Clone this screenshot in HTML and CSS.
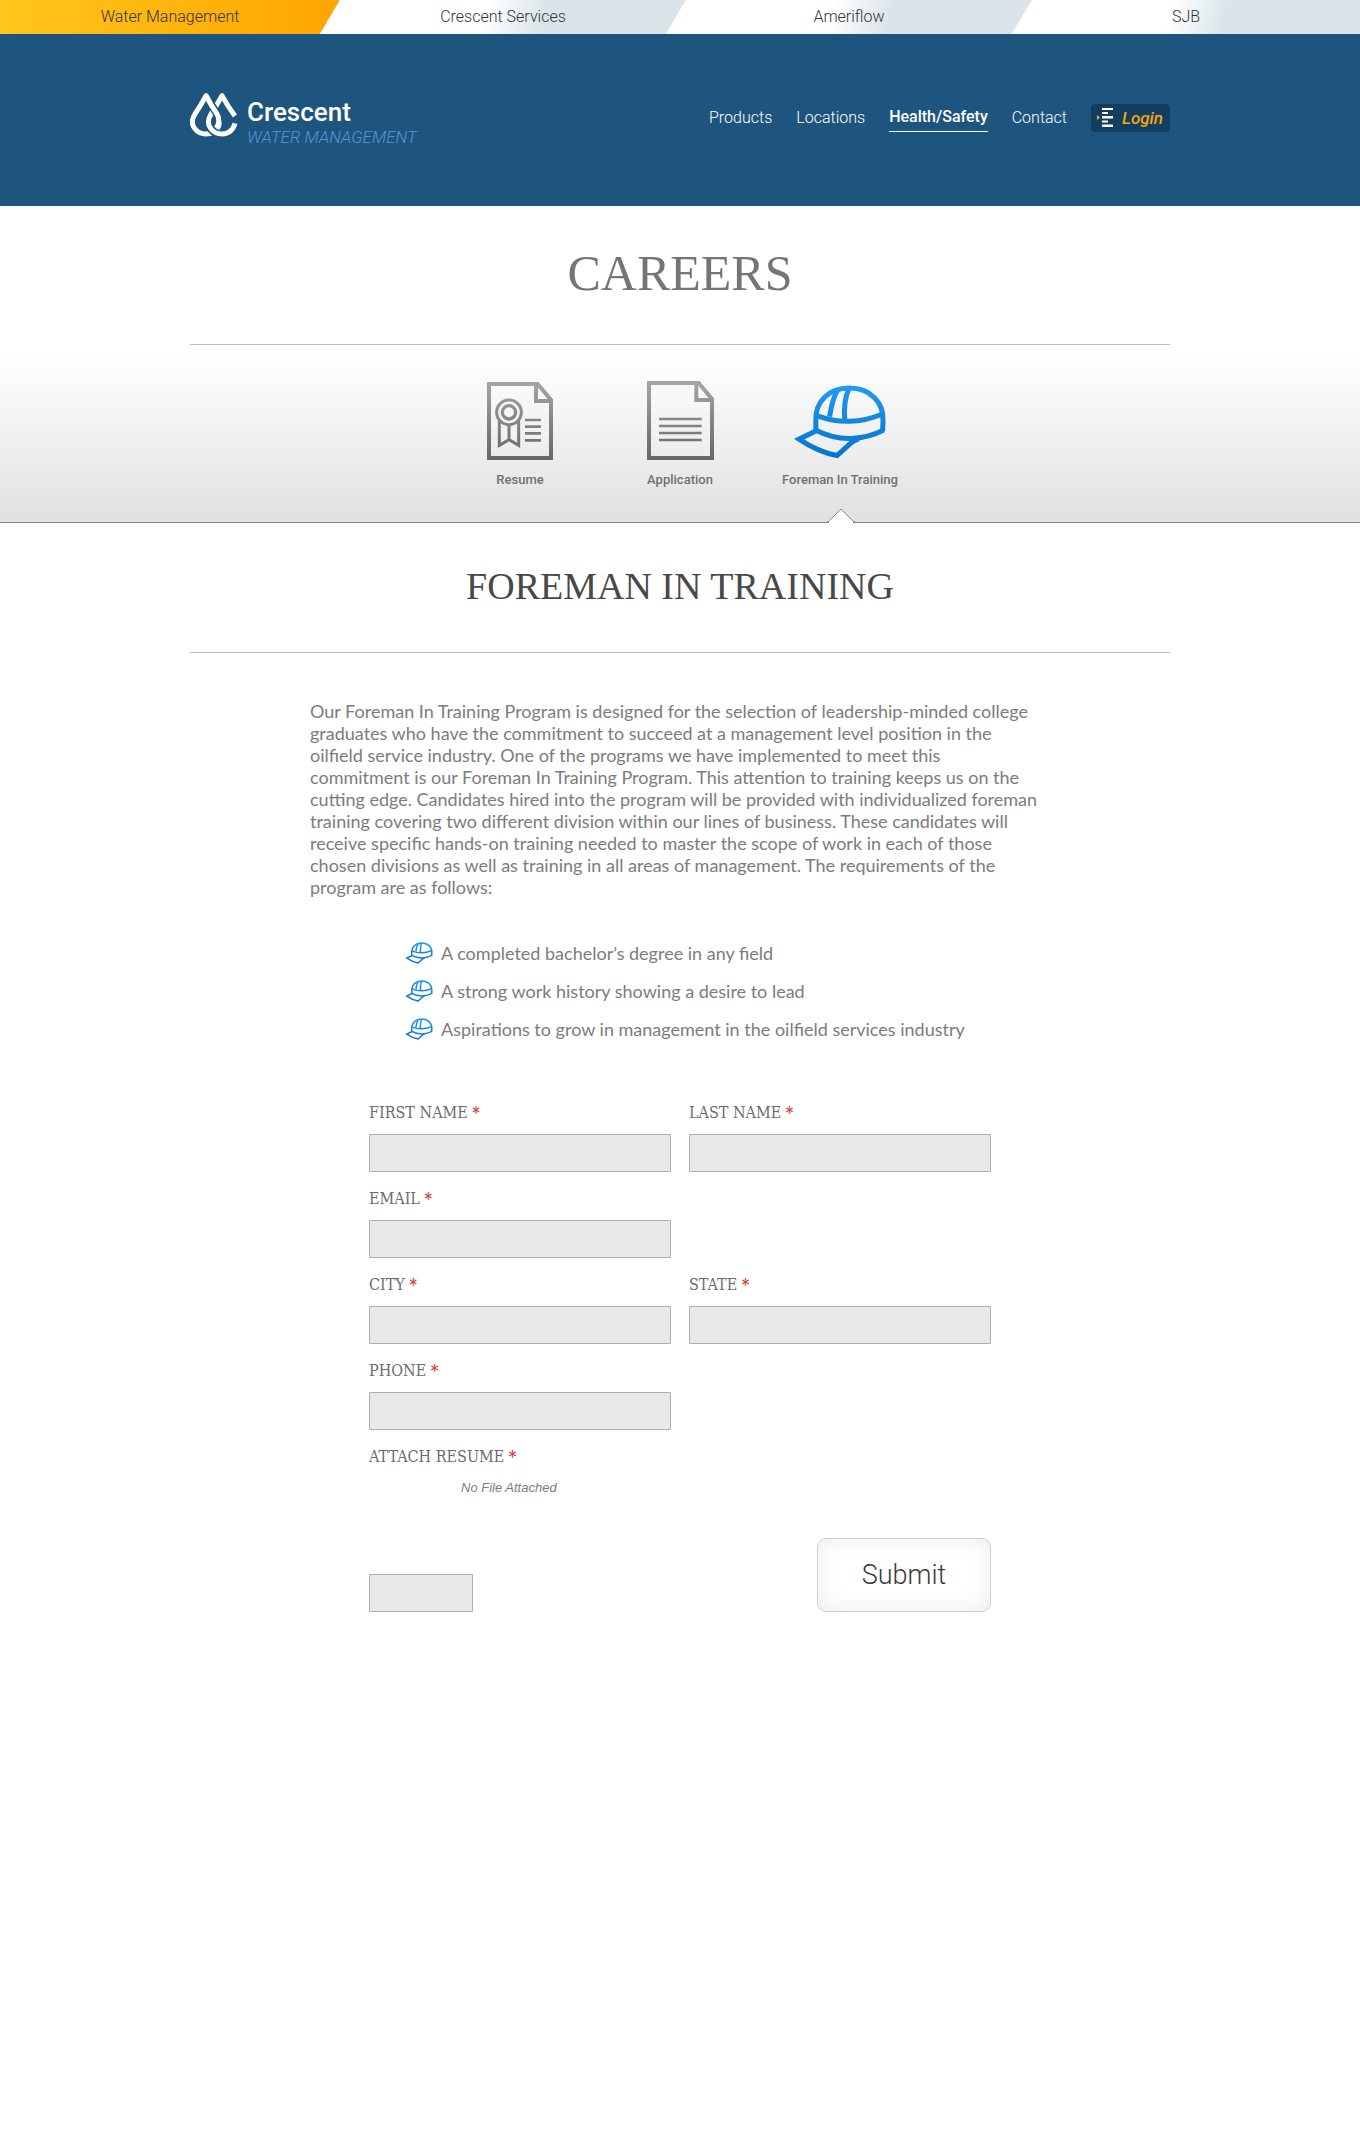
FILE: index.html
```html
<!DOCTYPE html>
<html lang="en">
<head>
<meta charset="utf-8">
<title>Foreman In Training | Crescent Water Management</title>
<link rel="stylesheet" href="styles.css">
</head>
<body>
<svg class="defs" aria-hidden="true">
  <defs>
    <linearGradient id="grey" gradientUnits="userSpaceOnUse" x1="0" y1="30" x2="0" y2="270">
      <stop offset="0" stop-color="#a6a6a6"/><stop offset="1" stop-color="#666"/>
    </linearGradient>
    <linearGradient id="blue" gradientUnits="userSpaceOnUse" x1="0" y1="46" x2="0" y2="265">
      <stop offset="0" stop-color="#2199f2"/><stop offset="1" stop-color="#0673cc"/>
    </linearGradient>
    <symbol id="hat" viewBox="36 46 280 220">
      <g fill="none" stroke="url(#blue)" stroke-width="15">
        <path d="M104 184V155C100 96 142 55 204 55S308 98 304 155L303 183"/>
        <path d="M107 137Q155 155 204 154T302 132"/>
        <path d="M103 180Q155 207 211 205Q262 203 306 180"/>
        <path d="M170 60Q154 82 145 140"/>
        <path d="M202 58Q186 92 190 150"/>
        <path d="M107 181L54 207Q110 245 167 256L208 219Q216 211 232 206"/>
      </g>
    </symbol>
  </defs>
</svg>

<nav class="tabs" aria-label="Companies">
  <a class="tab tab-active" href="#">Water Management</a>
  <a class="tab" href="#">Crescent Services</a>
  <a class="tab" href="#">Ameriflow</a>
  <a class="tab" href="#">SJB</a>
</nav>

<header class="header">
  <div class="container header-row">
    <a class="logo" href="#">
      <svg class="logo-mark" viewBox="27 38 144 132" aria-hidden="true">
        <g fill="none" stroke-width="15" stroke-linejoin="round">
          <path stroke="#fff" d="M75 46Q58 78 42 101C20 136 50 161 75 161C108 161 125 134 108 101Q92 78 75 46Z"/>
          <path stroke="#1e557e" stroke-width="24" d="M98 88L90 101C72 132 92 161 123 161"/>
          <path stroke="#fff" d="M162 107Q140 78 123 46Q106 78 90 101C68 136 98 161 123 161Q153 160 162 129"/>
          <path stroke="#1e557e" stroke-width="24" d="M86 65Q100 88 108 101Q115 113 114 125"/>
          <path stroke="#fff" d="M75 46Q92 78 108 101Q120 122 106 143"/>
        </g>
      </svg>
      <span class="logo-text">
        <span class="logo-name">Crescent</span>
        <span class="logo-sub">WATER MANAGEMENT</span>
      </span>
    </a>
    <nav class="menu" aria-label="Main">
      <a href="#">Products</a>
      <a href="#">Locations</a>
      <a class="current" href="#">Health/Safety</a>
      <a href="#">Contact</a>
      <a class="login" href="#">
        <svg width="17" height="19" viewBox="0 0 17 19" aria-hidden="true">
          <path fill="#f9a50d" d="M0 7l3 2.500L0 12z"/>
          <path fill="#fff" d="M5 0h11v2H5zM5 4h6v2H5zM5 8h11v2.500H5zM5 12.500h6v2H5zM5 16.500h11v2.500H5z"/>
        </svg>
        Login
      </a>
    </nav>
  </div>
</header>

<main>
  <h1 class="container page-title">CAREERS</h1>

  <nav class="picker" aria-label="Careers">
    <a class="pick" href="#">
      <svg width="68" height="80" viewBox="21 30 204 240" aria-hidden="true">
        <g fill="none" stroke="url(#grey)" stroke-width="12">
          <path d="M30 42H176L216 90V264H30Z"/>
          <path d="M171 42V93H216"/>
          <circle cx="90" cy="127" r="37" stroke-width="9"/>
          <circle cx="90" cy="127" r="20" stroke-width="10"/>
          <path stroke-width="9" d="M61 153V226L90 209L119 226V153M90 163V209"/>
          <path stroke-width="8" d="M138 150H186M138 170H186M138 190H186M138 211H186"/>
        </g>
      </svg>
      Resume
    </a>
    <a class="pick" href="#">
      <svg width="68" height="80" viewBox="501 30 204 240" aria-hidden="true">
        <g fill="none" stroke="url(#grey)" stroke-width="12">
          <path d="M510 39H659L699 87V264H510Z"/>
          <path d="M652 39V90H699"/>
          <path stroke-width="8" d="M540 147H668M540 168H668M540 189H668M540 210H668"/>
        </g>
      </svg>
      Application
    </a>
    <a class="pick pick-active" href="#" aria-current="page">
      <svg width="94" height="80" aria-hidden="true"><use href="#hat" y="5" height="74" width="94"/></svg>
      Foreman In Training
      <svg class="notch" width="28" height="15" viewBox="0 0 28 15" aria-hidden="true">
        <path fill="#fff" stroke="#868686" d="M0 13.500H1.500L14 1L26.500 13.500H28"/><path fill="#fff" d="M2 13H26V15H2z"/>
      </svg>
    </a>
  </nav>

  <h2 class="container section-title">FOREMAN IN TRAINING</h2>

  <p class="intro">
    Our Foreman In Training Program is designed for the selection of leadership-minded college<br>
    graduates who have the commitment to succeed at a management level position in the<br>
    oilfield service industry. One of the programs we have implemented to meet this<br>
    commitment is our Foreman In Training Program. This attention to training keeps us on the<br>
    cutting edge. Candidates hired into the program will be provided with individualized foreman<br>
    training covering two different division within our lines of business. These candidates will<br>
    receive specific hands-on training needed to master the scope of work in each of those<br>
    chosen divisions as well as training in all areas of management. The requirements of the<br>
    program are as follows:
  </p>

  <ul class="requirements">
    <li><svg width="28" height="22" aria-hidden="true"><use href="#hat"/></svg>A completed bachelor’s degree in any field</li>
    <li><svg width="28" height="22" aria-hidden="true"><use href="#hat"/></svg>A strong work history showing a desire to lead</li>
    <li><svg width="28" height="22" aria-hidden="true"><use href="#hat"/></svg>Aspirations to grow in management in the oilfield services industry</li>
  </ul>

  <form class="form">
    <div class="field">
      <label for="first">FIRST NAME <b>*</b></label>
      <input id="first" type="text">
    </div>
    <div class="field">
      <label for="last">LAST NAME <b>*</b></label>
      <input id="last" type="text">
    </div>
    <div class="field alone">
      <label for="email">EMAIL <b>*</b></label>
      <input id="email" type="email">
    </div>
    <div class="field">
      <label for="city">CITY <b>*</b></label>
      <input id="city" type="text">
    </div>
    <div class="field">
      <label for="state">STATE <b>*</b></label>
      <input id="state" type="text">
    </div>
    <div class="field alone">
      <label for="phone">PHONE <b>*</b></label>
      <input id="phone" type="tel">
    </div>
    <div class="field alone">
      <label for="resume">ATTACH RESUME <b>*</b></label>
      <input class="file" id="resume" type="file">
      <span class="file-status">No File Attached</span>
    </div>
    <div class="actions">
      <input class="code" type="text" aria-label="Verification code">
      <button class="submit" type="submit">Submit</button>
    </div>
  </form>
</main>
</body>
</html>
```
FILE: styles.css
```css
* { box-sizing: border-box; }

body {
  margin: 0;
  background: #fff;
  color: #7c7c7c;
  font-family: Roboto, "Liberation Sans", sans-serif;
}

a { color: inherit; text-decoration: none; }

.defs { position: absolute; width: 0; height: 0; }

.container { max-width: 980px; margin: 0 auto; }

/* Company tabs: each one overhangs the next by its slanted edge */
.tabs {
  display: grid;
  grid-template-columns: 320fr 346fr 346fr 348fr;
  height: 34px;
}

.tab {
  margin-right: -20px;
  clip-path: polygon(20px 0, 100% 0, calc(100% - 20px) 100%, 0 100%);
  background: linear-gradient(105deg, #fff 45%, #dae5e9 61%);
  color: #333;
  font-size: 16px;
  font-weight: 300;
  line-height: 34px;
  text-align: center;
}

.tab-active {
  clip-path: polygon(0 0, 100% 0, calc(100% - 20px) 100%, 0 100%);
  background: linear-gradient(90deg, #ffc61b, #ffa500);
}

.tab:last-child {
  margin-right: 0;
  clip-path: polygon(20px 0, 100% 0, 100% 100%, 0 100%);
}

.header { background: #1e557e; color: #fff; }

.header-row {
  display: flex;
  justify-content: space-between;
  padding: 59px 0;
}

.logo { display: flex; gap: 9px; }

.logo-mark { width: 48px; height: 44px; }

.logo-text { display: flex; flex-direction: column; padding-top: 4px; }

.logo-name { font-size: 26px; font-weight: 500; line-height: 30px; }

.logo-sub {
  color: #4d9bd6;
  font-size: 17px;
  font-style: italic;
  font-weight: 300;
  line-height: 20px;
}

.menu {
  display: flex;
  align-items: center;
  align-self: flex-start;
  gap: 24px;
  margin-top: 10px;
  font-size: 16px;
  font-weight: 300;
  line-height: 28px;
}

.menu .current { border-bottom: 1px solid #fff; font-weight: 500; }

.menu .login {
  display: flex;
  align-items: center;
  gap: 8px;
  padding: 0 7px 0 6px;
  border-radius: 4px;
  background: #123e5f;
  color: #f9a50d;
  font-size: 17px;
  font-style: italic;
  font-weight: 500;
}

.page-title, .section-title {
  border-bottom: 1px solid #bdbdbd;
  font-family: "Liberation Serif", serif;
  font-weight: 400;
  text-align: center;
}

.page-title {
  padding: 37px 0 41px;
  color: #757575;
  font-size: 50px;
  line-height: 60px;
}

.section-title {
  padding: 42px 0 45px;
  color: #484848;
  font-size: 38px;
  line-height: 42px;
}

.picker {
  display: flex;
  justify-content: center;
  height: 178px;
  padding-top: 35px;
  border-bottom: 1px solid #868686;
  background: linear-gradient(#fff 5%, #e1e1e1);
}

.pick {
  position: relative;
  display: flex;
  flex-direction: column;
  align-items: center;
  gap: 11px;
  width: 160px;
  color: #707070;
  font-size: 13px;
  font-weight: 500;
  line-height: 18px;
}

.notch { position: absolute; bottom: -1px; left: 67px; }

.intro {
  width: 740px;
  max-width: 100%;
  margin: 47px auto 0;
  font-family: Lato, sans-serif;
  font-size: 18px;
  line-height: 22px;
}

.requirements {
  width: 740px;
  max-width: 100%;
  margin: 36px auto 0;
  padding: 0 0 0 95px;
  font-family: Lato, sans-serif;
  font-size: 18px;
  line-height: 38px;
  list-style: none;
}

.requirements li { display: flex; align-items: center; gap: 8px; }

.requirements svg { flex: none; }

.form {
  display: grid;
  grid-template-columns: 1fr 1fr;
  column-gap: 18px;
  row-gap: 15px;
  width: 622px;
  max-width: 100%;
  margin: 53px auto 0;
  padding-bottom: 80px;
}

.field { display: flex; flex-direction: column; gap: 9px; }

.alone { grid-column: 1 / -1; width: calc(50% - 9px); }

.field label {
  color: #6c6c6c;
  font-family: "DejaVu Serif Condensed", "DejaVu Serif", serif;
  font-size: 16px;
  font-stretch: condensed;
  line-height: 24px;
}

.field b { color: #dc3b3b; }

.form input {
  width: 100%;
  height: 38px;
  border: 1px solid #adadad;
  border-radius: 1px;
  background: #e9e9e9;
}

.form .file { position: absolute; width: 1px; height: 1px; opacity: 0; }

.file-status {
  padding-left: 92px;
  font-family: "Liberation Sans", sans-serif;
  font-size: 13px;
  font-style: italic;
  line-height: 20px;
}

.actions {
  display: flex;
  grid-column: 1 / -1;
  align-items: flex-end;
  justify-content: space-between;
  margin-top: 25px;
}

.form .code { width: 104px; }

.submit {
  width: 174px;
  height: 74px;
  border: 1px solid #cfcfcf;
  border-radius: 9px;
  background: #fff;
  box-shadow: inset 0 0 24px #ededed;
  color: #3a3a3a;
  font-family: inherit;
  font-size: 27px;
  font-weight: 300;
}
```
